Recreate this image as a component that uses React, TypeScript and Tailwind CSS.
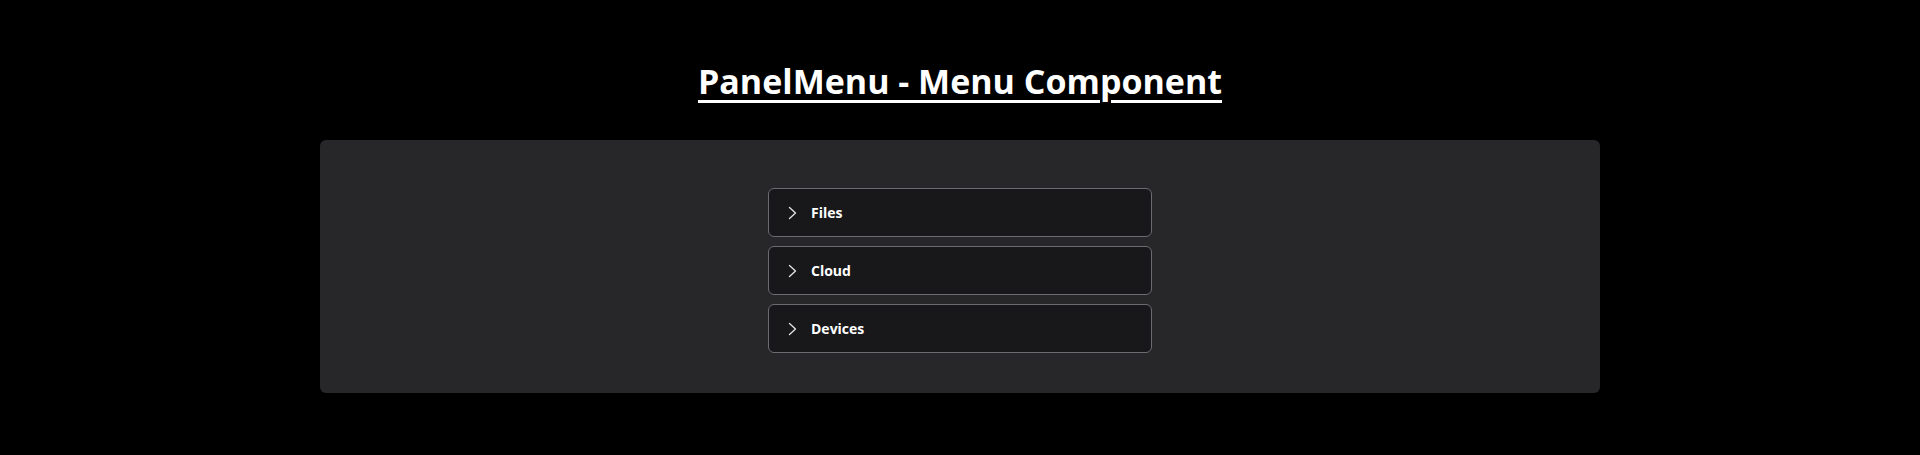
const items = ['Files', 'Cloud', 'Devices'];

function Chevron() {
  return (
    <svg width="16" height="16" viewBox="0 0 16 16" fill="none" className="shrink-0">
      <polyline points="4.5,2.5 10.5,8 4.5,13.5" stroke="#e4e4e7" strokeWidth="1.3" strokeLinecap="round" strokeLinejoin="round" />
    </svg>
  );
}

export default function App() {
  return (
    <div className="min-h-[455px] bg-black flex flex-col items-center font-['Open_Sans',sans-serif]">
      <h1 className="mt-[57px] text-[34px] leading-[48px] font-bold text-white underline underline-offset-[6px] decoration-[3px]">
        PanelMenu - Menu Component
      </h1>

      <div className="mt-[35px] w-[1280px] bg-[#27272a] rounded-md pt-12 pb-10 flex flex-col items-center gap-[9px]">
        {items.map((label) => (
          <div
            key={label}
            className="w-[384px] h-[49px] flex items-center gap-[10px] pl-4 bg-[#18181b] border border-[#6b6b70] rounded-md"
          >
            <Chevron />
            <span className="text-[14px] font-bold text-white">{label}</span>
          </div>
        ))}
      </div>
    </div>
  );
}
